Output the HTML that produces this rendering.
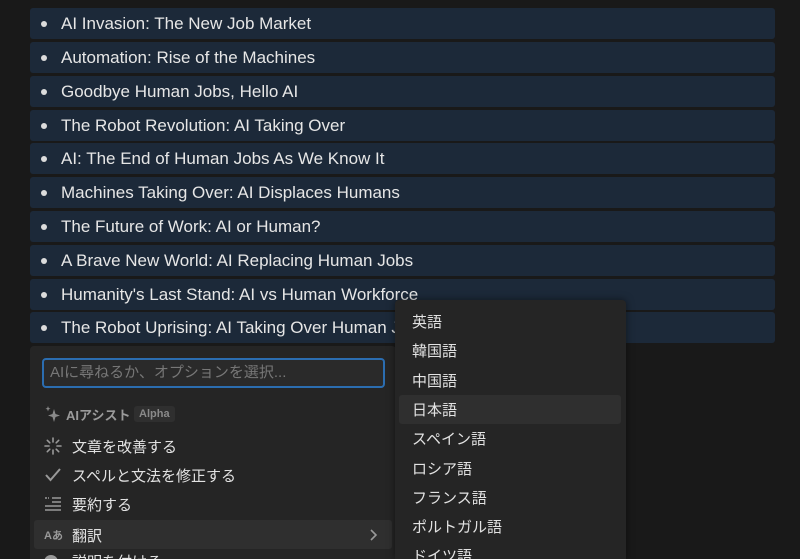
<!DOCTYPE html>
<html style="height:559px;overflow:hidden"><head><meta charset="utf-8"><style>
body{margin:0;width:800px;height:559px;background:#191919;overflow:hidden;position:relative;font-family:"Liberation Sans","Noto Sans CJK JP",sans-serif;}
.row{position:absolute;left:30px;width:745px;height:31px;background:#1c2939;border-radius:3px;color:#e6e6e6;font-size:17px;line-height:31px;}
.row::before{content:"";position:absolute;left:11px;top:13px;width:6px;height:6px;border-radius:50%;background:#dcdcdc;}
.row span{position:absolute;left:31px;white-space:nowrap;}
.lm{position:absolute;left:30px;top:346px;width:366px;height:213px;background:#252525;border-radius:4px 4px 0 0;}
.inp{position:absolute;left:42px;top:358px;width:333px;height:26px;border:2px solid #2b6db0;border-radius:4px;background:#2a2a2a;color:#777;font-size:15px;line-height:26px;padding-left:6px;box-sizing:content-box;}
.li{position:absolute;left:72px;color:#e2e2e2;font-size:15px;white-space:nowrap;}
.ic{position:absolute;left:44px;}
.rm{position:absolute;left:395px;top:300px;width:231px;height:259px;background:#252525;border-radius:4px 4px 0 0;box-shadow:0 0 8px rgba(0,0,0,.5);}
.ri{position:absolute;left:412px;color:#e2e2e2;font-size:15px;white-space:nowrap;}
</style></head><body>
<div class="row" style="top:8px"><span>AI Invasion: The New Job Market</span></div>
<div class="row" style="top:42px"><span>Automation: Rise of the Machines</span></div>
<div class="row" style="top:76px"><span>Goodbye Human Jobs, Hello AI</span></div>
<div class="row" style="top:110px"><span>The Robot Revolution: AI Taking Over</span></div>
<div class="row" style="top:143px"><span>AI: The End of Human Jobs As We Know It</span></div>
<div class="row" style="top:177px"><span>Machines Taking Over: AI Displaces Humans</span></div>
<div class="row" style="top:211px"><span>The Future of Work: AI or Human?</span></div>
<div class="row" style="top:245px"><span>A Brave New World: AI Replacing Human Jobs</span></div>
<div class="row" style="top:279px"><span>Humanity's Last Stand: AI vs Human Workforce</span></div>
<div class="row" style="top:312px"><span>The Robot Uprising: AI Taking Over Human Jobs</span></div>
<div class="lm"></div>
<div class="inp">AIに尋ねるか、オプションを選択...</div>
<svg class="ic" style="top:405px;left:45px" width="16" height="18" viewBox="0 0 16 18"><path d="M9 4 L10.5 9 L15 10.5 L10.5 12 L9 17 L7.5 12 L3 10.5 L7.5 9Z" fill="#8a8a8a"/><path d="M3 1 L3.7 3 L5.5 3.7 L3.7 4.4 L3 6.5 L2.3 4.4 L0.5 3.7 L2.3 3Z" fill="#8a8a8a"/></svg>
<div style="position:absolute;left:66px;top:405px;color:#9a9a9a;font-size:13px;font-weight:bold">AIアシスト</div>
<div style="position:absolute;left:134px;top:406px;background:#2f2f2f;color:#8a8a8a;font-size:11px;font-weight:bold;padding:2px 5px;border-radius:3px">Alpha</div>
<svg class="ic" style="top:437px" width="18" height="18" viewBox="0 0 18 18" stroke="#999" stroke-width="1.6" stroke-linecap="round"><path d="M9 1v4M9 13v4M1 9h4M13 9h4M3.3 3.3l2.5 2.5M12.2 12.2l2.5 2.5M3.3 14.7l2.5-2.5M12.2 5.8l2.5-2.5"/></svg>
<div class="li" style="top:436px">文章を改善する</div>
<svg class="ic" style="top:466px" width="18" height="18" viewBox="0 0 18 18"><path d="M2 9l4.5 5L16 3" fill="none" stroke="#999" stroke-width="2"/></svg>
<div class="li" style="top:465px">スペルと文法を修正する</div>
<svg class="ic" style="top:496px" width="18" height="16" viewBox="0 0 18 16" stroke="#999" stroke-width="1.6"><path d="M1 2h2M4 2h1M8 2h9M8 6h9M1 10h16M1 14h16"/></svg>
<div class="li" style="top:494px">要約する</div>
<div style="position:absolute;left:34px;top:520px;width:358px;height:29px;background:#2f2f2f;border-radius:3px"></div>
<div style="position:absolute;left:44px;top:527px;color:#999;font-size:11px;font-weight:bold">Aあ</div><div class="li" style="top:525px">翻訳</div>
<svg style="position:absolute;left:368px;top:528px" width="10" height="14" viewBox="0 0 10 14"><path d="M3 2l5 5-5 5" fill="none" stroke="#999" stroke-width="1.6"/></svg>
<div style="position:absolute;left:44px;top:555px;width:14px;height:14px;border-radius:50%;background:#999"></div>
<div class="li" style="top:551px">説明を付ける</div>
<div class="rm"></div>
<div style="position:absolute;left:399px;top:395px;width:222px;height:29px;background:#2f2f2f;border-radius:3px"></div>
<div class="ri" style="top:311px">英語</div>
<div class="ri" style="top:340px">韓国語</div>
<div class="ri" style="top:370px">中国語</div>
<div class="ri" style="top:399px">日本語</div>
<div class="ri" style="top:428px">スペイン語</div>
<div class="ri" style="top:458px">ロシア語</div>
<div class="ri" style="top:487px">フランス語</div>
<div class="ri" style="top:516px">ポルトガル語</div>
<div class="ri" style="top:545px">ドイツ語</div>
</body></html>
